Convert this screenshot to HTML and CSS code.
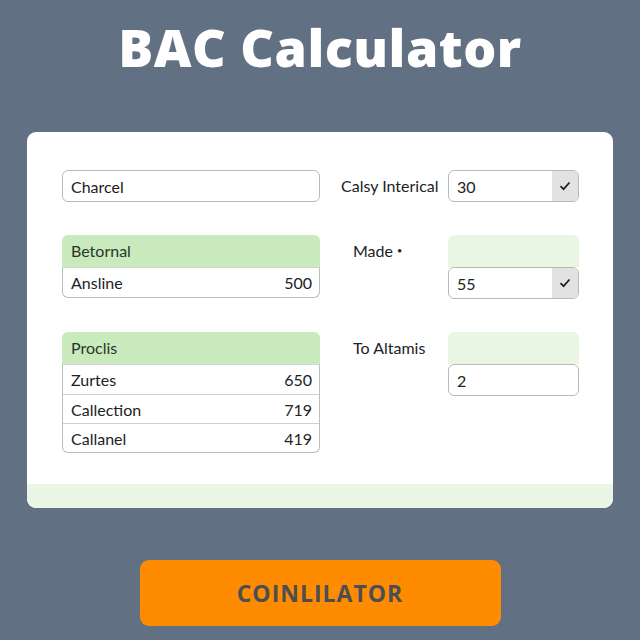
FILE: index.html
```html
<!DOCTYPE html>
<html>
<head>
<meta charset="utf-8">
<link rel="stylesheet" href="styles.css">
</head>
<body>
<div class="page">
  <h1 class="title">BAC Calculator</h1>
  <div class="card">
    <div class="grid">
      <div class="field"><span>Charcel</span></div>
      <div class="label label-first">Calsy Interical</div>
      <div class="field check-field"><span>30</span><span class="check"><svg width="12" height="10" viewBox="0 0 12 10"><path d="M1.5 5.2 L4.6 8.2 L10.5 1.5" fill="none" stroke="#222" stroke-width="1.8"/></svg></span></div>

      <div class="table">
        <div class="thead">Betornal</div>
        <div class="tbody">
          <div class="trow"><span>Ansline</span><span>500</span></div>
        </div>
      </div>
      <div class="label label-mid">Made <span class="dot">•</span></div>
      <div class="stack">
        <div class="lightbox"></div>
        <div class="field check-field"><span>55</span><span class="check"><svg width="12" height="10" viewBox="0 0 12 10"><path d="M1.5 5.2 L4.6 8.2 L10.5 1.5" fill="none" stroke="#222" stroke-width="1.8"/></svg></span></div>
      </div>

      <div class="table">
        <div class="thead">Proclis</div>
        <div class="tbody">
          <div class="trow"><span>Zurtes</span><span>650</span></div>
          <div class="trow"><span>Callection</span><span>719</span></div>
          <div class="trow"><span>Callanel</span><span>419</span></div>
        </div>
      </div>
      <div class="label label-mid">To Altamis</div>
      <div class="stack">
        <div class="lightbox"></div>
        <div class="field"><span>2</span></div>
      </div>
    </div>
    <div class="strip"></div>
  </div>
  <button class="cta">COINLILATOR</button>
</div>
</body>
</html>
```
FILE: styles.css
```css
* { box-sizing: border-box; }
html, body { margin: 0; padding: 0; }
body {
  background: #627084;
  font-family: "Lato", "Open Sans", sans-serif;
  color: #222;
  width: 640px;
  height: 640px;
  overflow: hidden;
}
.page {
  display: flex;
  flex-direction: column;
  align-items: center;
}
.title {
  margin: 17px 0 0;
  height: 115px;
  font-family: "Open Sans", sans-serif;
  font-weight: 800;
  font-size: 52px;
  line-height: 60px;
  color: #fff;
  letter-spacing: 0.5px;
}
.card {
  width: 586px;
  height: 376px;
  background: #fff;
  border-radius: 9px;
  padding-top: 38px;
  display: flex;
  flex-direction: column;
  overflow: hidden;
}
.grid {
  display: grid;
  grid-template-columns: 258px 128px 131px;
  grid-template-rows: 32px 64px auto;
  row-gap: 33px;
  margin-left: 35px;
  align-items: start;
  align-content: start;
  flex: 1;
}
.field {
  height: 32px;
  border: 1px solid #b9b9b9;
  border-radius: 6px;
  display: flex;
  align-items: center;
  justify-content: space-between;
  padding-left: 8px;
  font-size: 16px;
  background: #fff;
  overflow: hidden;
}
.check-field { padding-right: 0; }
.check {
  width: 26px;
  height: 100%;
  background: #e2e2e2;
  display: flex;
  align-items: center;
  justify-content: center;
}
.label {
  font-size: 16px;
  line-height: 32px;
  color: #222;
}
.dot { font-size: 9px; vertical-align: 3px; }
.label-first { padding-left: 21px; }
.label-mid { padding-left: 33px; }
.table { display: flex; flex-direction: column; }
.thead {
  height: 32px;
  background: #c8eabc;
  border-radius: 6px 6px 0 0;
  padding-left: 9px;
  font-size: 16px;
  line-height: 32px;
  color: #2a3528;
}
.tbody {
  border: 1px solid #bdbdbd;
  border-top: 1px solid #d4d4d4;
  border-radius: 0 0 6px 6px;
  overflow: hidden;
}
.trow {
  height: 29px;
  display: flex;
  align-items: center;
  justify-content: space-between;
  padding: 0 7px 0 8px;
  font-size: 16px;
  border-top: 1px solid #d0d0d0;
}
.trow:first-child { border-top: none; }
.stack { display: flex; flex-direction: column; }
.lightbox {
  height: 32px;
  background: #e9f6e3;
  border-radius: 6px 6px 0 0;
}
.strip {
  height: 24px;
  background: #eaf5e4;
}
.cta {
  margin-top: 52px;
  width: 361px;
  height: 66px;
  border: none;
  border-radius: 9px;
  background: #ff8b00;
  font-family: "Open Sans", sans-serif;
  font-weight: 700;
  font-size: 23px;
  color: #4b4e52;
  letter-spacing: 1px;
}
```
